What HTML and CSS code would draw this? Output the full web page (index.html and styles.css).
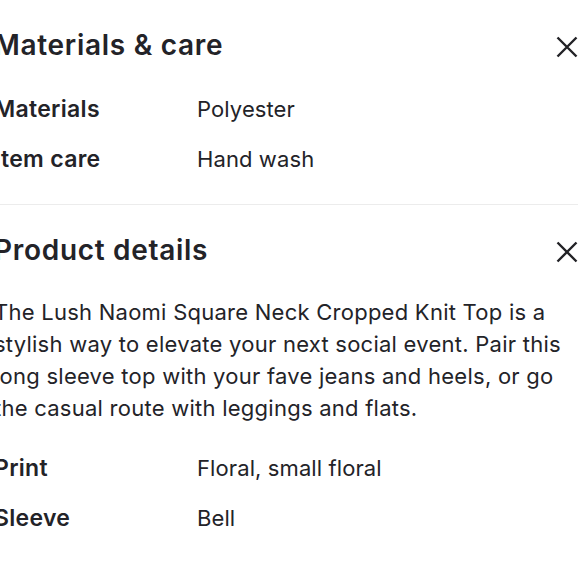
FILE: index.html
```html
<!DOCTYPE html>
<html lang="en">
<head>
<meta charset="utf-8">
<title>Materials &amp; care</title>
<link rel="stylesheet" href="styles.css">
</head>
<body>
<div class="panel">
  <section class="section section-first">
    <div class="section-head">
      <h2 class="section-title">Materials &amp; care</h2>
      <button class="close" aria-label="Close">
        <svg viewBox="0 0 22 22" width="22" height="22"><path d="M1.5 1.5 L20.5 20.5 M20.5 1.5 L1.5 20.5"/></svg>
      </button>
    </div>
    <dl class="attrs">
      <dt>Materials</dt><dd>Polyester</dd>
      <dt>Item care</dt><dd>Hand wash</dd>
    </dl>
  </section>
  <section class="section">
    <div class="section-head">
      <h2 class="section-title">Product details</h2>
      <button class="close" aria-label="Close">
        <svg viewBox="0 0 22 22" width="22" height="22"><path d="M1.5 1.5 L20.5 20.5 M20.5 1.5 L1.5 20.5"/></svg>
      </button>
    </div>
    <p class="desc">The Lush Naomi Square Neck Cropped Knit Top is a stylish way to elevate your next social event. Pair this long sleeve top with your fave jeans and heels, or go the casual route with leggings and flats.</p>
    <dl class="attrs">
      <dt>Print</dt><dd>Floral, small floral</dd>
      <dt>Sleeve</dt><dd>Bell</dd>
    </dl>
  </section>
</div>
</body>
</html>
```
FILE: styles.css
```css
html, body {
  margin: 0;
  padding: 0;
  background: #ffffff;
}
body {
  font-family: Inter, Lato, sans-serif;
  color: #232328;
  overflow: hidden;
}
.panel {
  margin-left: -6px;
  padding-right: 2px;
}
.section {
  padding: 27px 0 29px;
  border-bottom: 1px solid #ececec;
}
.section + .section {
  border-bottom: none;
}
.section-head {
  display: flex;
  align-items: center;
  justify-content: space-between;
}
.section-title {
  margin: 0;
  font-size: 28px;
  line-height: 36px;
  font-weight: 600;
  letter-spacing: 0.7px;
}
.close {
  border: 0;
  background: none;
  padding: 0;
  width: 22px;
  height: 22px;
  display: flex;
  margin-top: 3px;
}
.close svg {
  stroke: #222226;
  stroke-width: 2.4;
  fill: none;
}
.attrs {
  margin: 30px 0 0;
  display: grid;
  grid-template-columns: 203px 1fr;
  row-gap: 18px;
  line-height: 32px;
  align-items: baseline;
}
.attrs dt {
  font-size: 23px;
  font-weight: 600;
  letter-spacing: 0.3px;
}
.attrs dd {
  margin: 0;
  font-size: 22px;
  letter-spacing: 0.1px;
}
.desc {
  margin: 28px 0 0;
  font-size: 22px;
  line-height: 32px;
  letter-spacing: 0.25px;
}
.desc + .attrs {
  margin-top: 28px;
}
```
